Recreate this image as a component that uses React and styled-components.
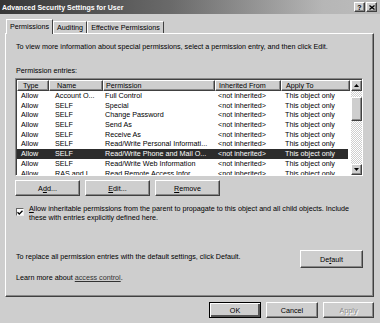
import styled, { createGlobalStyle, css } from "styled-components";

const GlobalStyle = createGlobalStyle`
  html, body {
    margin: 0;
    padding: 0;
    background: #cecece;
  }
  body {
    font-family: "Liberation Sans", Arial, sans-serif;
    font-size: 7.2px;
    color: #000;
  }
`;

const raised = css`
  border-top: 1px solid #fff;
  border-left: 1px solid #fff;
  border-right: 1px solid #404040;
  border-bottom: 1px solid #404040;
  box-shadow: inset -1px -1px 0 #888;
`;

const Window = styled.div`
  width: 380px;
  height: 323px;
  display: flex;
  flex-direction: column;
  background: #cecece;
  overflow: hidden;
`;

const TitleBar = styled.div`
  height: 14px;
  display: flex;
  align-items: center;
  justify-content: space-between;
  padding: 0 3px 0 2px;
  background: linear-gradient(to right, #363636 0%, #6a6a6a 45%, #b6b6b6 85%, #bcbcbc 100%);
`;

const Title = styled.span`
  color: #fff;
  font-weight: bold;
  font-size: 7px;
`;

const Controls = styled.div`
  display: flex;
  gap: 1px;
`;

const CtrlButton = styled.div`
  width: 9px;
  height: 8px;
  background: #cecece;
  ${raised};
  display: flex;
  align-items: center;
  justify-content: center;
  font-weight: bold;
  font-size: 7px;
  line-height: 1;
`;

const TabStrip = styled.div`
  display: flex;
  align-items: flex-end;
  height: 19px;
  padding-left: 6px;
  position: relative;
  z-index: 1;
`;

const Tab = styled.div`
  height: ${(p) => (p.$active ? 15 : 12)}px;
  margin-bottom: ${(p) => (p.$active ? -1 : 0)}px;
  width: ${(p) => p.$w}px;
  box-sizing: border-box;
  display: flex;
  align-items: center;
  justify-content: center;
  background: #cecece;
  border-top: 1px solid #fff;
  border-left: 1px solid #fff;
  border-right: 1px solid #404040;
  padding-bottom: ${(p) => (p.$active ? 2 : 0)}px;
  white-space: nowrap;
`;

const Panel = styled.div`
  margin: 0 6px 0 5px;
  height: 264px;
  box-sizing: border-box;
  border-top: 1px solid #fff;
  border-left: 1px solid #fff;
  border-right: 1px solid #404040;
  border-bottom: 1px solid #404040;
  box-shadow: inset -1px -1px 0 #888;
  padding: 0 10px 0 9px;
  display: flex;
  flex-direction: column;
`;

const Line = styled.div`
  height: 9px;
  line-height: 9px;
  margin-top: ${(p) => p.$mt || 0}px;
  padding-left: 1px;
  white-space: nowrap;
`;

const ListBox = styled.div`
  margin-top: 3px;
  height: 98px;
  box-sizing: border-box;
  border-top: 1px solid #888;
  border-left: 1px solid #888;
  border-right: 1px solid #fff;
  border-bottom: 1px solid #fff;
  box-shadow: inset 1px 1px 0 #404040;
  padding: 1px 0 0 1px;
  background: #fff;
  display: flex;
`;

const Table = styled.div`
  flex: 1;
  overflow: hidden;
`;

const HeaderRow = styled.div`
  display: flex;
  height: 11px;
`;

const HeaderCell = styled.div`
  width: ${(p) => p.$w}px;
  box-sizing: border-box;
  background: #cecece;
  ${raised};
  line-height: 9px;
  padding-left: ${(p) => p.$pl}px;
  white-space: nowrap;
`;

const Row = styled.div`
  display: flex;
  height: 9.7px;
  line-height: 9.7px;
  background: ${(p) => (p.$selected ? "#2c2c2c" : "transparent")};
  color: ${(p) => (p.$selected ? "#fff" : "#000")};
  width: 331px;
`;

const Cell = styled.div`
  width: ${(p) => p.$w}px;
  box-sizing: border-box;
  padding-left: ${(p) => p.$pl}px;
  white-space: nowrap;
  overflow: hidden;
`;

const ScrollBar = styled.div`
  width: 11px;
  display: flex;
  flex-direction: column;
  background: repeating-conic-gradient(#fff 0 25%, #cecece 0 50%) 0 0 / 2px 2px;
`;

const ScrollBtn = styled.div`
  height: 11px;
  box-sizing: border-box;
  background: #cecece;
  ${raised};
  display: flex;
  align-items: center;
  justify-content: center;
`;

const Thumb = styled.div`
  height: 24px;
  margin-top: 6px;
  box-sizing: border-box;
  background: #cecece;
  ${raised};
`;

const Track = styled.div`
  flex: 1;
`;

const ButtonRow = styled.div`
  display: flex;
  gap: 5px;
  margin-top: 4px;
`;

const Button = styled.div`
  width: ${(p) => p.$w || 65}px;
  height: ${(p) => p.$h || 16}px;
  box-sizing: border-box;
  background: #cecece;
  ${raised};
  display: flex;
  align-items: center;
  justify-content: center;
  color: ${(p) => (p.$disabled ? "#8a8a8a" : "#000")};
  text-shadow: ${(p) => (p.$disabled ? "1px 1px 0 #fff" : "none")};
  ${(p) =>
    p.$default &&
    css`
      outline: 1px solid #000;
      outline-offset: -1px;
      box-shadow: inset 1px 1px 0 #fff, inset -2px -2px 0 #555;
    `}
`;

const CheckRow = styled.div`
  display: flex;
  align-items: flex-start;
  gap: 5px;
  margin-top: 8px;
  padding-left: 1px;
`;

const CheckBox = styled.div`
  width: 8px;
  height: 8px;
  flex: none;
  margin-top: 4px;
  box-sizing: border-box;
  background: #fff;
  border-top: 1px solid #666;
  border-left: 1px solid #666;
  border-right: 1px solid #eee;
  border-bottom: 1px solid #eee;
  display: flex;
  align-items: center;
  justify-content: center;
`;

const CheckText = styled.div`
  line-height: 9px;
  white-space: nowrap;
`;

const DefaultRow = styled.div`
  display: flex;
  justify-content: space-between;
  align-items: flex-start;
  margin-top: 28px;
`;

const Link = styled.span`
  text-decoration: underline;
  color: #333;
`;

const Footer = styled.div`
  display: flex;
  justify-content: flex-end;
  gap: 5px;
  padding: 5px 6px 0 0;
`;

const U = styled.span`
  text-decoration: underline;
`;

const cols = [
  { key: "type", label: "Type", w: 32, pl: 5 },
  { key: "name", label: "Name", w: 54, pl: 7 },
  { key: "perm", label: "Permission", w: 112, pl: 2 },
  { key: "from", label: "Inherited From", w: 66, pl: 3 },
  { key: "apply", label: "Apply To", w: 69, pl: 4 },
];

const rows = [
  ["Allow", "Account O...", "Full Control"],
  ["Allow", "SELF", "Special"],
  ["Allow", "SELF", "Change Password"],
  ["Allow", "SELF", "Send As"],
  ["Allow", "SELF", "Receive As"],
  ["Allow", "SELF", "Read/Write Personal Informati..."],
  ["Allow", "SELF", "Read/Write Phone and Mail O...", true],
  ["Allow", "SELF", "Read/Write Web Information"],
  ["Allow", "RAS and I...", "Read Remote Access Infor..."],
];

const Arrow = ({ up }) => (
  <svg width="5" height="3" viewBox="0 0 5 3">
    <path d={up ? "M2.5 0 L5 3 L0 3 Z" : "M0 0 L5 0 L2.5 3 Z"} fill="#000" />
  </svg>
);

export default function App() {
  return (
    <>
      <GlobalStyle />
      <Window>
        <TitleBar>
          <Title>Advanced Security Settings for User</Title>
          <Controls>
            <CtrlButton>?</CtrlButton>
            <CtrlButton>
              <svg width="6" height="5" viewBox="0 0 6 5">
                <path d="M0.5 0.5 L5.5 4.5 M5.5 0.5 L0.5 4.5" stroke="#000" strokeWidth="1.3" />
              </svg>
            </CtrlButton>
          </Controls>
        </TitleBar>

        <TabStrip>
          <Tab $active $w={47}>Permissions</Tab>
          <Tab $w={34}>Auditing</Tab>
          <Tab $w={77}>Effective Permissions</Tab>
        </TabStrip>

        <Panel>
          <Line $mt={8}>
            To view more information about special permissions, select a permission entry, and then click Edit.
          </Line>
          <Line $mt={15}>Permission entries:</Line>
          <ListBox>
            <Table>
              <HeaderRow>
                {cols.map((c) => (
                  <HeaderCell key={c.key} $w={c.w} $pl={c.pl}>
                    {c.label}
                  </HeaderCell>
                ))}
              </HeaderRow>
              {rows.map((r, i) => (
                <Row key={i} $selected={r[3]}>
                  <Cell $w={32} $pl={4}>{r[0]}</Cell>
                  <Cell $w={54} $pl={6}>{r[1]}</Cell>
                  <Cell $w={112} $pl={2}>{r[2]}</Cell>
                  <Cell $w={66} $pl={3}>&lt;not inherited&gt;</Cell>
                  <Cell $w={67} $pl={4}>This object only</Cell>
                </Row>
              ))}
            </Table>
            <ScrollBar>
              <ScrollBtn>
                <Arrow up />
              </ScrollBtn>
              <Thumb />
              <Track />
              <ScrollBtn>
                <Arrow />
              </ScrollBtn>
            </ScrollBar>
          </ListBox>

          <ButtonRow>
            <Button>A<U>d</U>d...</Button>
            <Button><U>E</U>dit...</Button>
            <Button><U>R</U>emove</Button>
          </ButtonRow>

          <CheckRow>
            <CheckBox>
              <svg width="6" height="5" viewBox="0 0 6 5">
                <path d="M0.5 2.2 L2.3 4 L5.5 0.8" stroke="#000" strokeWidth="1.3" fill="none" />
              </svg>
            </CheckBox>
            <CheckText>
              <U>A</U>llow inheritable permissions from the parent to propagate to this object and all child objects. Include
              <br />
              these with entries explicitly defined here.
            </CheckText>
          </CheckRow>

          <DefaultRow>
            <Line $mt={2}>To replace all permission entries with the default settings, click Default.</Line>
            <Button $w={63} $h={18}>De<U>f</U>ault</Button>
          </DefaultRow>

          <Line $mt={5}>
            Learn more about <Link>access control</Link>.
          </Line>
        </Panel>

        <Footer>
          <Button $w={52} $default>OK</Button>
          <Button $w={52}>Cancel</Button>
          <Button $w={51} $disabled>Apply</Button>
        </Footer>
      </Window>
    </>
  );
}
